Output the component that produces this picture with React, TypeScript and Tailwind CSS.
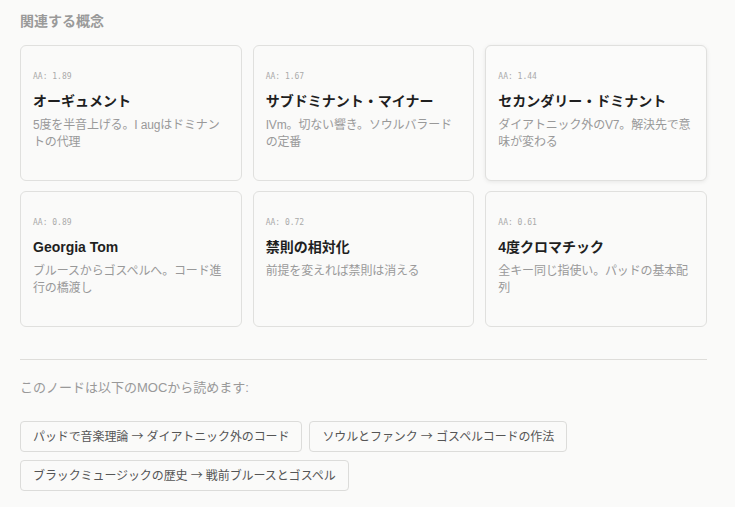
const concepts = [
    { score: "1.89", title: "オーギュメント", desc: "5度を半音上げる。I augはドミナントの代理" },
    { score: "1.67", title: "サブドミナント・マイナー", desc: "IVm。切ない響き。ソウルバラードの定番" },
    { score: "1.44", title: "セカンダリー・ドミナント", desc: "ダイアトニック外のV7。解決先で意味が変わる", active: true },
    { score: "0.89", title: "Georgia Tom", desc: "ブルースからゴスペルへ。コード進行の橋渡し" },
    { score: "0.72", title: "禁則の相対化", desc: "前提を変えれば禁則は消える" },
    { score: "0.61", title: "4度クロマチック", desc: "全キー同じ指使い。パッドの基本配列" },
];

const mocs = [
    ["パッドで音楽理論", "ダイアトニック外のコード"],
    ["ソウルとファンク", "ゴスペルコードの作法"],
    ["ブラックミュージックの歴史", "戦前ブルースとゴスペル"],
];

const sans = "font-['Liberation_Sans','Noto_Sans_CJK_JP',sans-serif]";

const ConceptCard = ({ score, title, desc, active }: { score: string; title: string; desc: string; active?: boolean }) => (
    <div
        className={`flex h-[136px] flex-col rounded-[6px] border border-[#e0e0de] px-[12px] pt-[26px] ${active ? "bg-[#fbfbfa] shadow-[0_1px_4px_rgba(0,0,0,0.08)]" : "bg-[#fafaf9]"}`}
    >
        <div className="font-['DejaVu_Sans_Mono',monospace] text-[8px] leading-[10px] text-[#aaa]">AA: {score}</div>
        <div className="mt-[9px] text-[14px] leading-[20px] font-bold text-[#1f1f1f]">{title}</div>
        <div className="mt-[6px] text-[12px] leading-[17px] tracking-[-0.15px] text-[#999]">{desc}</div>
    </div>
);

export default function App() {
    return (
        <div className={`min-h-[507px] bg-[#fafaf9] ${sans}`}>
            <div className="w-[707px] pt-[11px] pl-[20px]">
                <h2 className="text-[14px] leading-[20px] font-bold text-[#9a9a9a]">関連する概念</h2>

                <div className="mt-[14px] grid grid-cols-3 gap-x-[11px] gap-y-[10px]">
                    {concepts.map((c) => (
                        <ConceptCard key={c.title} {...c} />
                    ))}
                </div>

                <div className="mt-[32px] border-t border-[#deddda]" />

                <p className="mt-[18px] text-[13px] leading-[20px] text-[#999]">このノードは以下のMOCから読めます:</p>

                <div className="mt-[23px] flex flex-wrap gap-x-[7px] gap-y-[8px]">
                    {mocs.map(([moc, section]) => (
                        <span
                            key={moc}
                            className="rounded-[4px] border border-[#dcdcda] bg-[#fafaf9] px-[12px] py-[5px] text-[12px] leading-[18px] tracking-[-0.1px] text-[#555]"
                        >
                            {moc}{" "}
                            <span className="font-['Noto_Sans_CJK_JP',sans-serif]">→</span>
                            {" "}{section}
                        </span>
                    ))}
                </div>
            </div>
        </div>
    );
}
